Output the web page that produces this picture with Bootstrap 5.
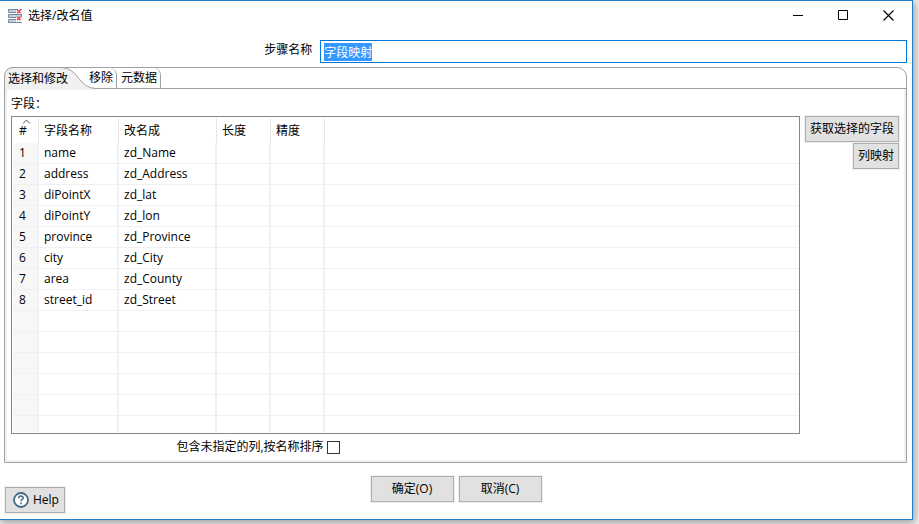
<!DOCTYPE html>
<html lang="zh-CN">
<head>
<meta charset="utf-8">
<meta name="viewport" content="width=device-width, initial-scale=1">
<title>选择/改名值</title>
<link href="https://cdn.jsdelivr.net/npm/bootstrap@5.3.0/dist/css/bootstrap.min.css" rel="stylesheet">
<style>
body{background:#f2f2f2;color:#000;font:12px/18px "Open Sans","Noto Sans CJK SC",sans-serif;overflow-x:hidden}
.dialog-win{margin:0 6px 6px 0;min-height:calc(100vh - 6px);background:#fff;border:solid #1c80d0;border-width:1px 1px 1px 0;box-shadow:1px 2px 8px 1px rgba(0,0,0,.35)}
.title-bar{height:31px;padding:0 1px 2px 8px}
.title-text{padding-left:6px}
.win-btn{width:45px;height:29px;padding:0;border:0;background:none;line-height:0}
.name-label{width:35%;padding-right:7px;padding-bottom:4px}
.name-input{height:23px;margin:0 5px 0 1px;padding:0 3px;border:1px solid #0078d7;border-radius:0;color:#000;line-height:18px;outline:0}
.name-input::selection{background:#3399ff;color:#fff}
.tab-panel{margin:4px 5px 0 4px;border:1px solid #a0a0a0;border-radius:10px 10px 0 0}
.tab-strip{height:21px}
.tab-item{position:relative;height:21px;padding:0 3px;border:0;border-bottom:1px solid #a0a0a0;background:none;color:#000;line-height:20px;text-align:left}
.tab-active{width:84px;border-bottom:0;z-index:1}
.tab-shape{position:absolute;left:-1px;top:-1px}
.tab-plain{border-right:1px solid #a0a0a0;border-top-right-radius:7px}
.tab-fill{border-bottom:1px solid #a0a0a0}
.tab-body{border:2px solid #f0f0f0;border-top:0;padding:6px 5px 4px 4px}
.field-title{margin-bottom:3px}
.grid-box{border:1px solid #828790;padding:1px}
.field-grid{width:100%;table-layout:fixed;border-collapse:separate;border-spacing:0}
.field-grid th{height:25px;padding:0 0 0 5px;font-weight:400;border-right:1px solid #e5e5e5;position:relative}
.field-grid td{height:21px;padding:0 0 0 5px;line-height:20px;border-right:2px solid #edf0f6;border-bottom:1px solid #f0f0f0}
.field-grid th:first-child,.field-grid td:first-child{padding-left:6px}
.field-grid th:last-child,.field-grid td:last-child{border-right:0}
.field-grid td:first-child{background:#f7f7f7}
.field-grid tr:last-child td{height:16px;border-bottom:0}
.c-num{width:26px}.c-name{width:80px}.c-new{width:98px}.c-small{width:54px}
.sort-mark{position:absolute;left:9px;top:1px}
.sys-btn{height:26px;padding:0 4px;border:1px solid #adadad;border-radius:0;background:#e1e1e1;color:#000;font-size:12px;line-height:18px;outline:1px solid #f0f0f0}
.wide-btn{width:83px}
.side-btns{gap:1px;padding-left:5px}
.check-row{width:37%;padding-top:4px}
.check-row input{appearance:none;width:13px;height:13px;margin:0 0 0 3px;border:1px solid #333;background:#fff}
.check-row input:checked{background:#333}
.action-row{padding-top:13px;gap:5px}
.help-row{padding:0 4px 6px 5px;margin-top:-15px}
.help-btn{padding:0 5px 0 7px}
</style>
<script src="https://cdn.jsdelivr.net/npm/bootstrap@5.3.0/dist/js/bootstrap.bundle.min.js"></script>
</head>
<body>
<main class="dialog-win d-flex flex-column">
  <header class="title-bar d-flex align-items-center">
    <svg width="14" height="14" viewBox="0 0 14 14" aria-hidden="true"><path fill="#c5d0d8" stroke="#70869a" d="M9 .5H.5v3H9M.5 5.5h13v3H.5zM9 10.5H.5v3H9"/><path stroke="#8a9dac" d="M9 .5h5M9 12.5h5v1"/><path fill="#fff" d="M8 0h6v5H8zM8 8h6v5H8z"/><path stroke="#70869a" d="M8 5.5h6M8 13.5h6M8 .5h2m2 0h2"/><path stroke="#f0425a" stroke-width="1.5" d="m9 .8 3.6 3.4m0-3.4L9 4.2M9 7.8l3.6 3.4m0-3.4L9 11.2"/></svg>
    <span class="title-text">选择/改名值</span>
    <div class="ms-auto d-flex">
      <button class="win-btn" type="button" aria-label="最小化"><svg width="11" height="11"><path stroke="#000" d="M0 5.5h10"/></svg></button>
      <button class="win-btn" type="button" aria-label="最大化"><svg width="11" height="11"><path fill="none" stroke="#000" d="M.5.5h9v9h-9z"/></svg></button>
      <button class="win-btn" type="button" aria-label="关闭"><svg width="11" height="11"><path stroke="#000" stroke-width="1.1" d="m.5.5 10 10m0-10-10 10"/></svg></button>
    </div>
  </header>
  <div class="d-flex align-items-center pt-2">
    <label class="name-label text-end" for="stepName">步骤名称</label>
    <input class="name-input flex-fill" id="stepName" type="text" value="字段映射">
  </div>
  <section class="tab-panel">
    <div class="tab-strip d-flex" role="tablist">
      <button class="tab-item tab-active" type="button" role="tab" aria-selected="true" aria-controls="pane">
        <svg class="tab-shape" width="92" height="23" aria-hidden="true"><path fill="#f0f0f0" d="M0 23V9Q1 1 9 .5H57C75 .5 74 21.5 92 21.5V23z"/><path fill="none" stroke="#a0a0a0" d="M.5 23V9Q1 1 9 .5H57C75 .5 74 21.5 92 21.5"/></svg>
        <span class="position-relative">选择和修改</span>
      </button>
      <button class="tab-item tab-plain ps-0" type="button" role="tab" aria-selected="false">移除</button>
      <button class="tab-item tab-plain ps-1" type="button" role="tab" aria-selected="false">元数据</button>
      <div class="tab-fill flex-fill"></div>
    </div>
    <div class="tab-body" id="pane" role="tabpanel">
      <div class="field-title">字段：</div>
      <div class="d-flex align-items-start">
        <div class="grid-box flex-fill">
          <table class="field-grid">
            <colgroup><col class="c-num"><col class="c-name"><col class="c-new"><col class="c-small"><col class="c-small"><col></colgroup>
            <thead><tr><th scope="col"><svg class="sort-mark" width="9" height="5" aria-hidden="true"><path fill="none" stroke="#555" d="m1 4.5 3.5-3.5L8 4.5"/></svg>#</th><th scope="col">字段名称</th><th scope="col">改名成</th><th scope="col">长度</th><th scope="col">精度</th><th></th></tr></thead>
            <tbody>
              <tr><td>1</td><td>name</td><td>zd_Name</td><td></td><td></td><td></td></tr>
              <tr><td>2</td><td>address</td><td>zd_Address</td><td></td><td></td><td></td></tr>
              <tr><td>3</td><td>diPointX</td><td>zd_lat</td><td></td><td></td><td></td></tr>
              <tr><td>4</td><td>diPointY</td><td>zd_lon</td><td></td><td></td><td></td></tr>
              <tr><td>5</td><td>province</td><td>zd_Province</td><td></td><td></td><td></td></tr>
              <tr><td>6</td><td>city</td><td>zd_City</td><td></td><td></td><td></td></tr>
              <tr><td>7</td><td>area</td><td>zd_County</td><td></td><td></td><td></td></tr>
              <tr><td>8</td><td>street_id</td><td>zd_Street</td><td></td><td></td><td></td></tr>
              <tr><td></td><td></td><td></td><td></td><td></td><td></td></tr>
              <tr><td></td><td></td><td></td><td></td><td></td><td></td></tr>
              <tr><td></td><td></td><td></td><td></td><td></td><td></td></tr>
              <tr><td></td><td></td><td></td><td></td><td></td><td></td></tr>
              <tr><td></td><td></td><td></td><td></td><td></td><td></td></tr>
              <tr><td></td><td></td><td></td><td></td><td></td><td></td></tr>
            </tbody>
          </table>
        </div>
        <div class="side-btns d-flex flex-column align-items-end flex-shrink-0">
          <button class="sys-btn" type="button">获取选择的字段</button>
          <button class="sys-btn" type="button">列映射</button>
        </div>
      </div>
      <div class="check-row d-flex align-items-center justify-content-end text-nowrap me-auto">
        <label for="sortRest">包含未指定的列,按名称排序</label><input id="sortRest" type="checkbox">
      </div>
    </div>
  </section>
  <footer class="mt-auto">
    <div class="action-row d-flex justify-content-center">
      <button class="sys-btn wide-btn" type="button">确定(O)</button>
      <button class="sys-btn wide-btn" type="button">取消(C)</button>
    </div>
    <div class="help-row">
      <button class="sys-btn help-btn d-inline-flex align-items-center" type="button"><svg class="me-1" width="16" height="16" viewBox="0 0 16 16" aria-hidden="true"><circle cx="8" cy="8" r="7" fill="#fff" stroke="#456a86" stroke-width="1.8"/><path fill="none" stroke="#456a86" stroke-width="1.6" d="M5.7 6.2C5.8 3.2 10.3 3.4 10.2 6 10.1 7.6 8 7.4 8 9.3M8 10.6v1.7"/></svg>Help</button>
    </div>
  </footer>
</main>
<script>
const stepName = document.getElementById('stepName');
stepName.focus();
stepName.select();
</script>
</body>
</html>
